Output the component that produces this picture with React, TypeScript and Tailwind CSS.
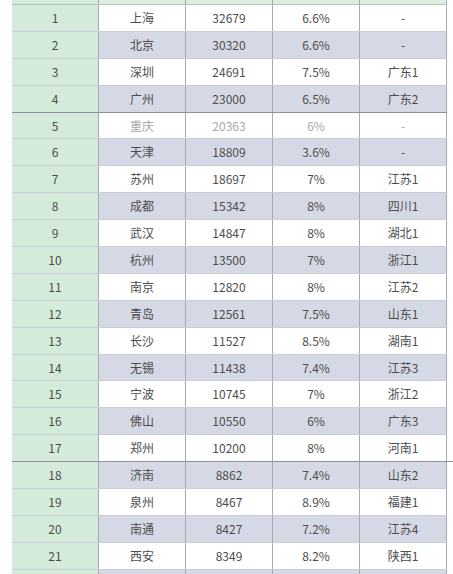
const rows: [number, string, string, string, string][] = [
  [1, '上海', '32679', '6.6%', '-'],
  [2, '北京', '30320', '6.6%', '-'],
  [3, '深圳', '24691', '7.5%', '广东1'],
  [4, '广州', '23000', '6.5%', '广东2'],
  [5, '重庆', '20363', '6%', '-'],
  [6, '天津', '18809', '3.6%', '-'],
  [7, '苏州', '18697', '7%', '江苏1'],
  [8, '成都', '15342', '8%', '四川1'],
  [9, '武汉', '14847', '8%', '湖北1'],
  [10, '杭州', '13500', '7%', '浙江1'],
  [11, '南京', '12820', '8%', '江苏2'],
  [12, '青岛', '12561', '7.5%', '山东1'],
  [13, '长沙', '11527', '8.5%', '湖南1'],
  [14, '无锡', '11438', '7.4%', '江苏3'],
  [15, '宁波', '10745', '7%', '浙江2'],
  [16, '佛山', '10550', '6%', '广东3'],
  [17, '郑州', '10200', '8%', '河南1'],
  [18, '济南', '8862', '7.4%', '山东2'],
  [19, '泉州', '8467', '8.9%', '福建1'],
  [20, '南通', '8427', '7.2%', '江苏4'],
  [21, '西安', '8349', '8.2%', '陕西1'],
];

function Row({ r }: { r: [number, string, string, string, string] }) {
  const [rank, city, gdp, growth, prov] = r;
  const even = rank % 2 === 0;
  const faded = rank === 5;
  // darker separators after 4 and 17
  const thick = rank === 4 || rank === 17;
  return (
    <div
      className={`relative grid grid-cols-[87px_87px_87px_87px_87px] h-[26.9px] border-b ${
        thick ? 'border-[#8d9099]' : 'border-[#c9cdd6]'
      } ${faded ? 'text-[#a8a8a8]' : 'text-[#4d4d4d]'} ${
        rank === 17
          ? 'after:absolute after:left-full after:bottom-[-1px] after:w-[8px] after:h-px after:bg-[#8d9099]'
          : ''
      }`}
    >
      <div className="flex items-center justify-center bg-[#d4ebd9] border-r border-[#a7aab3] text-[#4d4d4d]">
        {rank}
      </div>
      {[city, gdp, growth, prov].map((v, i) => (
        <div
          key={i}
          className={`flex items-center justify-center border-r border-[#a7aab3] ${
            even ? 'bg-[#d5d9e5]' : 'bg-white'
          }`}
        >
          {v}
        </div>
      ))}
    </div>
  );
}

export default function App() {
  return (
    <div
      className="w-[453px] h-[574px] overflow-hidden bg-white text-[12px]"
      style={{ fontFamily: '"Noto Sans CJK SC", "Noto Sans", sans-serif' }}
    >
      <div className="ml-[12px] w-[435px]">
        {/* header row, cut off */}
        <div className="grid grid-cols-[87px_87px_87px_87px_87px] h-[5px] border-b border-[#b5c2b8]">
          <div className="bg-[#d4ebd9] border-r border-[#a7aab3]" />
          <div className="bg-[#dcefe1] border-r border-[#a7aab3]" />
          <div className="bg-[#dcefe1] border-r border-[#a7aab3]" />
          <div className="bg-[#dcefe1] border-r border-[#a7aab3]" />
          <div className="bg-[#dcefe1] border-r border-[#a7aab3]" />
        </div>
        {rows.map((r) => (
          <Row key={r[0]} r={r} />
        ))}
        <div className="grid grid-cols-[87px_87px_87px_87px_87px] h-[10px]">
          <div className="bg-[#d4ebd9] border-r border-[#a7aab3]" />
          <div className="bg-[#d5d9e5] border-r border-[#a7aab3]" />
          <div className="bg-[#d5d9e5] border-r border-[#a7aab3]" />
          <div className="bg-[#d5d9e5] border-r border-[#a7aab3]" />
          <div className="bg-[#d5d9e5] border-r border-[#a7aab3]" />
        </div>
      </div>
    </div>
  );
}
